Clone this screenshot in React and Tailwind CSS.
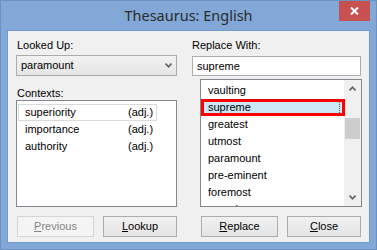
import React from 'react';

function Chevron({ up = false, className = '' }) {
  return (
    <svg width="7" height="5" viewBox="0 0 7 5" className={className}>
      <path
        d={up ? 'M0.5 4.5 L3.5 1.2 L6.5 4.5' : 'M0.5 0.5 L3.5 3.8 L6.5 0.5'}
        fill="none"
        stroke="#606060"
        strokeWidth="1.6"
      />
    </svg>
  );
}

function Button({ children, disabled = false, className = '' }) {
  return (
    <button
      className={
        'h-[21px] flex items-center justify-center border leading-[13px] ' +
        (disabled
          ? 'border-[#d5d5d5] bg-[#f4f4f4] text-[#838383] '
          : 'border-[#acacac] bg-gradient-to-b from-[#f0f0f0] to-[#e5e5e5] text-black ') +
        className
      }
    >
      {children}
    </button>
  );
}

const contexts = ['superiority', 'importance', 'authority'];
const synonyms = [
  'vaulting',
  'supreme',
  'greatest',
  'utmost',
  'paramount',
  'pre-eminent',
  'foremost',
  'superior',
];

export default function App() {
  return (
    <div className="w-[377px] h-[250px] bg-[#81a8d6] border border-[#6d92c2] flex flex-col font-['Liberation_Sans',Arial,sans-serif] text-[11px] text-black overflow-hidden">
      {/* title bar */}
      <div className="h-[29px] flex items-start shrink-0">
        <div className="w-[37px] shrink-0" />
        <div className="flex-1 text-center font-['Noto_Sans',sans-serif] text-[14.5px] leading-[29px] text-[#2b2b2b]">
          Thesaurus: English
        </div>
        <div className="w-[31px] h-[20px] mr-[6px] bg-[#c75050] flex items-center justify-center shrink-0">
          <svg width="9" height="8" viewBox="0 0 9 8">
            <path d="M1 0.5 L8 7.5 M8 0.5 L1 7.5" stroke="#ffffff" strokeWidth="2" />
          </svg>
        </div>
      </div>

      {/* client area */}
      <div className="mx-[6px] h-[213px] border border-[#7199cb] bg-[#f0f0f0] flex pl-[8px] pt-[8px] shrink-0">
        {/* left column */}
        <div className="w-[161px] flex flex-col shrink-0">
          <div className="h-[13px] leading-[13px] pl-[1px]">Looked Up:</div>
          <div className="mt-[3px] h-[21px] border border-[#acacac] bg-gradient-to-b from-[#f2f2f2] to-[#e5e5e5] flex items-center justify-between pl-[4px] pr-[4px]">
            <span className="leading-[13px]">paramount</span>
            <Chevron />
          </div>
          <div className="mt-[11px] h-[13px] leading-[13px] pl-[1px]">Contexts:</div>
          <div className="h-[107px] border border-[#828790] bg-white pt-[3px]">
            {contexts.map((c, i) => (
              <div
                key={c}
                className={
                  'ml-[1px] w-[139px] h-[17px] flex items-center pl-[6px] border ' +
                  (i === 0 ? 'border-[#dadada]' : 'border-transparent')
                }
              >
                <span className="w-[103px] shrink-0">{c}</span>
                <span>(adj.)</span>
              </div>
            ))}
          </div>
          <div className="mt-[9px] flex">
            <Button disabled className="ml-[1px] w-[77px]">
              <span><u className="underline-offset-[1px]">P</u>revious</span>
            </Button>
            <Button className="ml-[9px] w-[74px]">
              <span><u className="underline-offset-[1px]">L</u>ookup</span>
            </Button>
          </div>
        </div>

        {/* right column */}
        <div className="ml-[15px] w-[169px] flex flex-col shrink-0">
          <div className="h-[13px] leading-[13px]">Replace With:</div>
          <div className="mt-[4px] h-[20px] border border-[#abadb3] bg-white flex items-center pl-[4px]">
            <span className="leading-[13px]">supreme</span>
          </div>
          <div className="mt-[3px] ml-[8px] w-[162px] h-[128px] border border-[#828790] bg-white flex overflow-hidden">
            <div className="w-[143px] shrink-0 pt-[2px] relative z-10">
              {synonyms.map((s, i) =>
                i === 1 ? (
                  <div
                    key={s}
                    className="w-[144px] h-[17px] border-[3px] border-[#ff0000] bg-[#cce8f7] flex items-center pl-[4px] relative"
                  >
                    <span>{s}</span>
                    <span className="absolute right-[2px] top-0 bottom-0 border-r border-dotted border-[#555]" />
                  </div>
                ) : (
                  <div key={s} className="h-[17px] flex items-center pl-[7px]">
                    {s}
                  </div>
                )
              )}
            </div>
            <div className="w-[17px] shrink-0 bg-[#f0f0f0] flex flex-col items-center">
              <div className="h-[17px] flex items-center justify-center">
                <Chevron up />
              </div>
              <div className="mt-[21px] h-[21px] w-[15px] bg-[#cdcdcd]" />
              <div className="flex-1" />
              <div className="h-[17px] flex items-center justify-center">
                <Chevron />
              </div>
            </div>
          </div>
          <div className="mt-[9px] flex">
            <Button className="ml-[9px] w-[77px]">
              <span><u className="underline-offset-[1px]">R</u>eplace</span>
            </Button>
            <Button className="ml-[9px] w-[74px]">
              <span><u className="underline-offset-[1px]">C</u>lose</span>
            </Button>
          </div>
        </div>
      </div>
    </div>
  );
}
